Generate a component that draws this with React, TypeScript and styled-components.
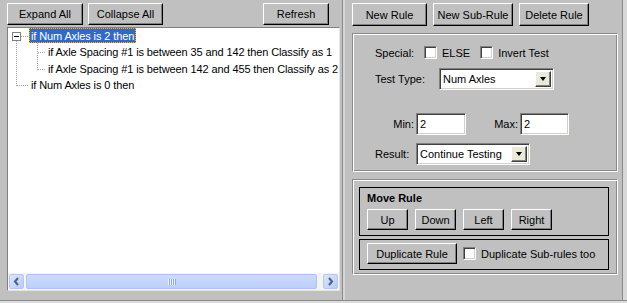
import styled, { createGlobalStyle } from "styled-components"

const GlobalStyle = createGlobalStyle`
  html, body {
    margin: 0;
    padding: 0;
    background: #c0c0c0;
  }
  body {
    font-family: "Liberation Sans", Arial, sans-serif;
    font-size: 11px;
    color: #000;
  }
`

const Window = styled.div`
  width: 627px;
  height: 303px;
  display: flex;
  flex-direction: column;
  overflow: hidden;
  background: #c0c0c0;
`
const Main = styled.div`
  display: flex;
  height: 300px;
`
const BottomEdge = styled.div`
  height: 3px;
  box-sizing: border-box;
  border-top: 1px solid #8a8a8a;
  background: #dcdcdc;
`
const LeftPane = styled.div`
  width: 342px;
  box-sizing: border-box;
  padding: 3px 2px 0 7px;
  display: flex;
  flex-direction: column;
`
const Splitter = styled.div`
  width: 3px;
  box-sizing: border-box;
  border-left: 1px solid #8a8a8a;
  background: #d6d6d6;
`
const RightPane = styled.div`
  width: 277px;
  box-sizing: border-box;
  padding: 3px 0 0 7px;
`
const RightEdge = styled.div`
  width: 5px;
  box-sizing: border-box;
  border-left: 1px solid #8a8a8a;
  background: #d8d8d8;
`
const Toolbar = styled.div<{ $gap: number; $mb: number }>`
  display: flex;
  gap: ${p => p.$gap}px;
  margin-bottom: ${p => p.$mb}px;
`
const WinButton = styled.button<{ $w: number; $h?: number; $push?: number }>`
  width: ${p => p.$w}px;
  height: ${p => p.$h ?? 22}px;
  flex: none;
  box-sizing: border-box;
  padding: 0;
  font: inherit;
  color: #000;
  background: #c0c0c0;
  border: 1px solid;
  border-color: #fff #000 #000 #fff;
  box-shadow: inset -1px -1px 0 #808080;
  ${p => (p.$push !== undefined ? `margin-left: auto; margin-right: ${p.$push}px;` : "")}
`

/* tree view */
const Tree = styled.div`
  width: 333px;
  height: 264px;
  box-sizing: border-box;
  border: 1px solid;
  border-color: #808080 #e4e4e4 #e4e4e4 #808080;
  background: #fff;
  display: flex;
  flex-direction: column;
`
const TreeBody = styled.div`
  flex: 1;
  position: relative;
  overflow: hidden;
`
const TreeLines = styled.svg`
  position: absolute;
  left: 0;
  top: 0;
`
const TreeRow = styled.div<{ $indent: number }>`
  height: 16.4px;
  padding-left: ${p => p.$indent}px;
  display: flex;
  align-items: flex-start;
`
const NodeLabel = styled.span<{ $selected?: boolean }>`
  height: 15px;
  line-height: 14px;
  box-sizing: border-box;
  padding: 0 1px;
  white-space: nowrap;
  letter-spacing: -0.12px;
  border: 1px dotted ${p => (p.$selected ? "#f2b640" : "transparent")};
  background: ${p => (p.$selected ? "#316ac5" : "transparent")};
  color: ${p => (p.$selected ? "#fff" : "#000")};
`
const Scrollbar = styled.div`
  height: 17px;
  box-sizing: border-box;
  padding: 1px;
  display: flex;
  background: #f5f4ef;
`
const ScrollArrow = styled.div`
  width: 15px;
  height: 15px;
  box-sizing: border-box;
  border: 1px solid #b4c8f4;
  border-radius: 2px;
  background: linear-gradient(135deg, #dbe5fd, #b8cbf8);
  display: flex;
  align-items: center;
  justify-content: center;
`
const Thumb = styled.div`
  flex: 1;
  margin: 0 6px 0 2px;
  box-sizing: border-box;
  border: 1px solid #aec3f3;
  border-radius: 2px;
  background: linear-gradient(180deg, #cddbfd, #bccff9);
  display: flex;
  align-items: center;
  justify-content: center;
`
const Grip = styled.div`
  width: 8px;
  height: 6px;
  background: repeating-linear-gradient(90deg, #eef3fe 0 1px, #8ca8e8 1px 2px);
`

/* right side */
const Group = styled.div<{ $h: number; $pad: string }>`
  width: 266px;
  height: ${p => p.$h}px;
  box-sizing: border-box;
  padding: ${p => p.$pad};
  border: 1px solid;
  border-color: #8a8a8a #fff #fff #8a8a8a;
  box-shadow: inset 1px 1px 0 #fff, inset -1px -1px 0 #8a8a8a;
  margin-bottom: 7px;
`
const FieldRow = styled.div<{ $h: number; $mb?: number }>`
  display: flex;
  align-items: center;
  height: ${p => p.$h}px;
  margin-bottom: ${p => p.$mb ?? 0}px;
`
const FieldLabel = styled.span<{ $w: number; $right?: boolean }>`
  width: ${p => p.$w}px;
  flex: none;
  box-sizing: border-box;
  text-align: ${p => (p.$right ? "right" : "left")};
  padding-right: ${p => (p.$right ? 2 : 0)}px;
  white-space: nowrap;
`
const Sunken = styled.div<{ $w: number; $h: number }>`
  width: ${p => p.$w}px;
  height: ${p => p.$h}px;
  flex: none;
  box-sizing: border-box;
  border: 1px solid;
  border-color: #808080 #fff #fff #808080;
  box-shadow: inset 1px 1px 0 #404040, inset -1px -1px 0 #d4d0c8;
  background: #fff;
  display: flex;
  align-items: center;
  padding: 2px;
`
const FieldText = styled.span`
  flex: 1;
  padding-left: 1px;
  white-space: nowrap;
`
const DropButton = styled.div`
  width: 16px;
  height: 16px;
  box-sizing: border-box;
  border: 1px solid;
  border-color: #fff #404040 #404040 #fff;
  box-shadow: inset -1px -1px 0 #808080;
  background: #ece9d8;
  display: flex;
  align-items: center;
  justify-content: center;
`
const Caret = styled.div`
  width: 0;
  height: 0;
  border-left: 3.5px solid transparent;
  border-right: 3.5px solid transparent;
  border-top: 4px solid #000;
`
const CheckText = styled.span<{ $mr?: number; $ml?: number }>`
  margin: 0 ${p => p.$mr ?? 0}px 0 ${p => p.$ml ?? 5}px;
  white-space: nowrap;
`
const FrameBox = styled.div<{ $h: number; $pad: string; $mb?: number }>`
  width: 250px;
  height: ${p => p.$h}px;
  box-sizing: border-box;
  border: 1px solid #000;
  padding: ${p => p.$pad};
  margin-bottom: ${p => p.$mb ?? 0}px;
`
const FrameTitle = styled.div`
  font-weight: bold;
  line-height: 13px;
  margin-bottom: 4px;
`
const ButtonRow = styled.div<{ $gap: number }>`
  display: flex;
  align-items: center;
  gap: ${p => p.$gap}px;
`

function Select(props: { w: number; value: string }) {
  return (
    <Sunken $w={props.w} $h={22}>
      <FieldText>{props.value}</FieldText>
      <DropButton>
        <Caret />
      </DropButton>
    </Sunken>
  )
}

function Checkbox() {
  return <Sunken $w={13} $h={13} />
}

function Chevron(props: { dir: "left" | "right" }) {
  const d = props.dir === "left" ? "M6 2 L3 5.5 L6 9" : "M3 2 L6 5.5 L3 9"
  return (
    <svg width="9" height="11" viewBox="0 0 9 11">
      <path d={d} fill="none" stroke="#4d6185" strokeWidth="2" />
    </svg>
  )
}

const rows = [
  { indent: 21, text: "if Num Axles is 2 then", selected: true },
  { indent: 38, text: "if Axle Spacing #1 is between 35 and 142 then Classify as 1" },
  { indent: 38, text: "if Axle Spacing #1 is between 142 and 455 then Classify as 2" },
  { indent: 21, text: "if Num Axles is 0 then" },
]

export default function App() {
  return (
    <Window>
      <GlobalStyle />
      <Main>
        <LeftPane>
          <Toolbar $gap={5} $mb={2}>
            <WinButton $w={76}>Expand All</WinButton>
            <WinButton $w={75}>Collapse All</WinButton>
            <WinButton $w={66} $push={11}>Refresh</WinButton>
          </Toolbar>
          <Tree>
            <TreeBody>
              <TreeLines width="60" height="70">
                <g stroke="#a0a0a0" strokeDasharray="1 1">
                  <line x1="8.5" y1="13" x2="8.5" y2="58" />
                  <line x1="13" y1="8.5" x2="21" y2="8.5" />
                  <line x1="9" y1="57.5" x2="21" y2="57.5" />
                  <line x1="29.5" y1="15" x2="29.5" y2="42" />
                  <line x1="30" y1="24.5" x2="38" y2="24.5" />
                  <line x1="30" y1="41.5" x2="38" y2="41.5" />
                </g>
                <rect x="4.5" y="4.5" width="8" height="8" fill="#fff" stroke="#808080" />
                <line x1="6" y1="8.5" x2="11" y2="8.5" stroke="#000" />
              </TreeLines>
              {rows.map((r, i) => (
                <TreeRow key={i} $indent={r.indent}>
                  <NodeLabel $selected={r.selected}>{r.text}</NodeLabel>
                </TreeRow>
              ))}
            </TreeBody>
            <Scrollbar>
              <ScrollArrow>
                <Chevron dir="left" />
              </ScrollArrow>
              <Thumb>
                <Grip />
              </Thumb>
              <ScrollArrow>
                <Chevron dir="right" />
              </ScrollArrow>
            </Scrollbar>
          </Tree>
        </LeftPane>
        <Splitter />
        <RightPane>
          <Toolbar $gap={6} $mb={7}>
            <WinButton $w={75} $h={23}>New Rule</WinButton>
            <WinButton $w={80} $h={23}>New Sub-Rule</WinButton>
            <WinButton $w={70} $h={23}>Delete Rule</WinButton>
          </Toolbar>
          <Group $h={139} $pad="12px 0 0 22px">
            <FieldRow $h={13} $mb={9}>
              <FieldLabel $w={49}>Special:</FieldLabel>
              <Checkbox />
              <CheckText $mr={10}>ELSE</CheckText>
              <Checkbox />
              <CheckText>Invert Test</CheckText>
            </FieldRow>
            <FieldRow $h={22} $mb={23}>
              <FieldLabel $w={64}>Test Type:</FieldLabel>
              <Select w={115} value="Num Axles" />
            </FieldRow>
            <FieldRow $h={22} $mb={8}>
              <FieldLabel $w={41} $right>Min:</FieldLabel>
              <Sunken $w={50} $h={22}>
                <FieldText>2</FieldText>
              </Sunken>
              <FieldLabel $w={54} $right>Max:</FieldLabel>
              <Sunken $w={49} $h={22}>
                <FieldText>2</FieldText>
              </Sunken>
            </FieldRow>
            <FieldRow $h={22}>
              <FieldLabel $w={41}>Result:</FieldLabel>
              <Select w={114} value="Continue Testing" />
            </FieldRow>
          </Group>
          <Group $h={96} $pad="7px 0 0 6px">
            <FrameBox $h={49} $pad="4px 0 0 7px" $mb={3}>
              <FrameTitle>Move Rule</FrameTitle>
              <ButtonRow $gap={7}>
                <WinButton $w={41} $h={21}>Up</WinButton>
                <WinButton $w={41} $h={21}>Down</WinButton>
                <WinButton $w={41} $h={21}>Left</WinButton>
                <WinButton $w={41} $h={21}>Right</WinButton>
              </ButtonRow>
            </FrameBox>
            <FrameBox $h={31} $pad="3px 0 0 7px">
              <ButtonRow $gap={6}>
                <WinButton $w={90} $h={21}>Duplicate Rule</WinButton>
                <Checkbox />
                <CheckText $ml={-1}>Duplicate Sub-rules too</CheckText>
              </ButtonRow>
            </FrameBox>
          </Group>
        </RightPane>
        <RightEdge />
      </Main>
      <BottomEdge />
    </Window>
  )
}
